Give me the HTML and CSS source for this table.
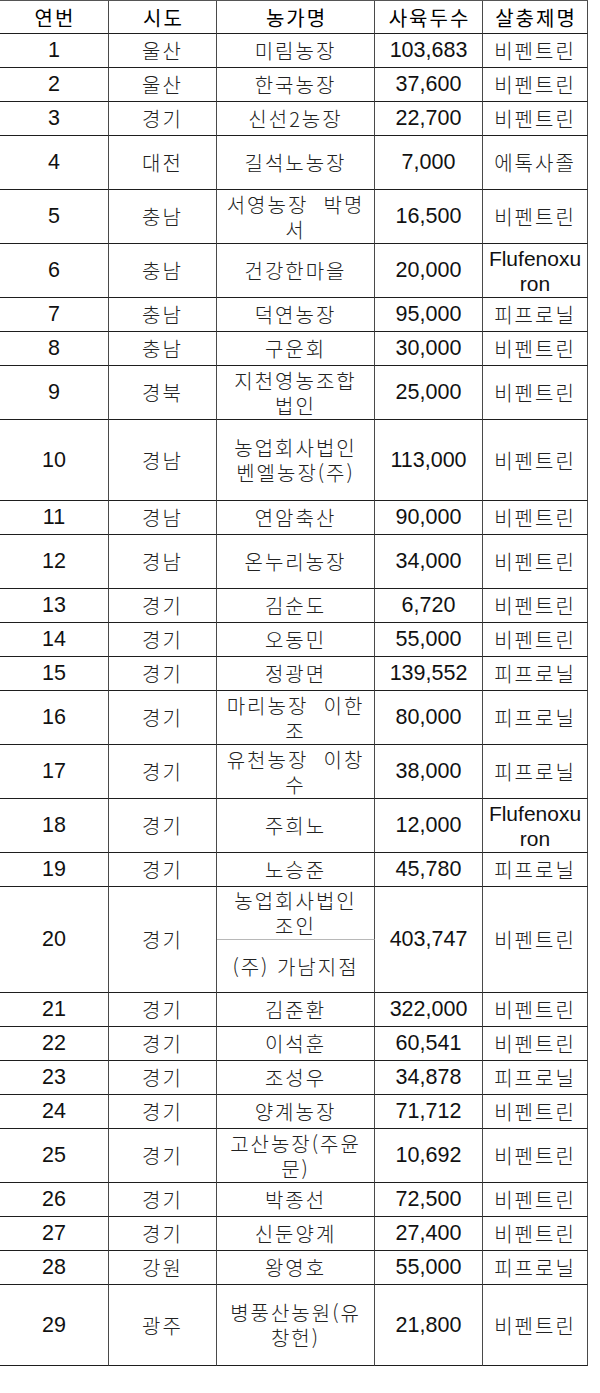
FILE: index.html
```html
<!DOCTYPE html>
<html lang="ko">
<head>
<meta charset="utf-8">
<title>살충제 검출 농가</title>
<link rel="stylesheet" href="styles.css">
</head>
<body>
<table class="sheet">
  <colgroup>
    <col class="c1"><col class="c2"><col class="c3"><col class="c4"><col class="c5">
  </colgroup>
  <thead>
    <tr class="hd"><th>연번</th><th>시도</th><th>농가명</th><th>사육두수</th><th>살충제명</th></tr>
  </thead>
  <tbody>
    <tr class="s"><td class="n">1</td><td class="k">울산</td><td class="k">미림농장</td><td class="n">103,683</td><td class="k">비펜트린</td></tr>
    <tr class="s"><td class="n">2</td><td class="k">울산</td><td class="k">한국농장</td><td class="n">37,600</td><td class="k">비펜트린</td></tr>
    <tr class="s"><td class="n">3</td><td class="k">경기</td><td class="k">신선2농장</td><td class="n">22,700</td><td class="k">비펜트린</td></tr>
    <tr class="d"><td class="n">4</td><td class="k">대전</td><td class="k">길석노농장</td><td class="n">7,000</td><td class="k">에톡사졸</td></tr>
    <tr class="d"><td class="n">5</td><td class="k">충남</td><td class="k">서영농장&nbsp; 박명<br>서</td><td class="n">16,500</td><td class="k">비펜트린</td></tr>
    <tr class="d"><td class="n">6</td><td class="k">충남</td><td class="k">건강한마을</td><td class="n">20,000</td><td class="n en">Flufenoxu<br>ron</td></tr>
    <tr class="s"><td class="n">7</td><td class="k">충남</td><td class="k">덕연농장</td><td class="n">95,000</td><td class="k">피프로닐</td></tr>
    <tr class="s"><td class="n">8</td><td class="k">충남</td><td class="k">구운회</td><td class="n">30,000</td><td class="k">비펜트린</td></tr>
    <tr class="d"><td class="n">9</td><td class="k">경북</td><td class="k">지천영농조합<br>법인</td><td class="n">25,000</td><td class="k">비펜트린</td></tr>
    <tr class="t"><td class="n">10</td><td class="k">경남</td><td class="k">농업회사법인<br>벤엘농장(주)</td><td class="n">113,000</td><td class="k">비펜트린</td></tr>
    <tr class="s"><td class="n">11</td><td class="k">경남</td><td class="k">연암축산</td><td class="n">90,000</td><td class="k">비펜트린</td></tr>
    <tr class="d"><td class="n">12</td><td class="k">경남</td><td class="k">온누리농장</td><td class="n">34,000</td><td class="k">비펜트린</td></tr>
    <tr class="s"><td class="n">13</td><td class="k">경기</td><td class="k">김순도</td><td class="n">6,720</td><td class="k">비펜트린</td></tr>
    <tr class="s"><td class="n">14</td><td class="k">경기</td><td class="k">오동민</td><td class="n">55,000</td><td class="k">비펜트린</td></tr>
    <tr class="s"><td class="n">15</td><td class="k">경기</td><td class="k">정광면</td><td class="n">139,552</td><td class="k">피프로닐</td></tr>
    <tr class="d"><td class="n">16</td><td class="k">경기</td><td class="k">마리농장&nbsp; 이한<br>조</td><td class="n">80,000</td><td class="k">피프로닐</td></tr>
    <tr class="d"><td class="n">17</td><td class="k">경기</td><td class="k">유천농장&nbsp; 이창<br>수</td><td class="n">38,000</td><td class="k">피프로닐</td></tr>
    <tr class="d"><td class="n">18</td><td class="k">경기</td><td class="k">주희노</td><td class="n">12,000</td><td class="n en">Flufenoxu<br>ron</td></tr>
    <tr class="s"><td class="n">19</td><td class="k">경기</td><td class="k">노승준</td><td class="n">45,780</td><td class="k">피프로닐</td></tr>
    <tr class="h"><td class="n" rowspan="2">20</td><td class="k" rowspan="2">경기</td><td class="k sub">농업회사법인<br>조인</td><td class="n" rowspan="2">403,747</td><td class="k" rowspan="2">비펜트린</td></tr>
    <tr class="h"><td class="k">(주) 가남지점</td></tr>
    <tr class="s"><td class="n">21</td><td class="k">경기</td><td class="k">김준환</td><td class="n">322,000</td><td class="k">비펜트린</td></tr>
    <tr class="s"><td class="n">22</td><td class="k">경기</td><td class="k">이석훈</td><td class="n">60,541</td><td class="k">비펜트린</td></tr>
    <tr class="s"><td class="n">23</td><td class="k">경기</td><td class="k">조성우</td><td class="n">34,878</td><td class="k">피프로닐</td></tr>
    <tr class="s"><td class="n">24</td><td class="k">경기</td><td class="k">양계농장</td><td class="n">71,712</td><td class="k">비펜트린</td></tr>
    <tr class="d"><td class="n">25</td><td class="k">경기</td><td class="k">고산농장(주윤<br>문)</td><td class="n">10,692</td><td class="k">비펜트린</td></tr>
    <tr class="s"><td class="n">26</td><td class="k">경기</td><td class="k">박종선</td><td class="n">72,500</td><td class="k">비펜트린</td></tr>
    <tr class="s"><td class="n">27</td><td class="k">경기</td><td class="k">신둔양계</td><td class="n">27,400</td><td class="k">비펜트린</td></tr>
    <tr class="s"><td class="n">28</td><td class="k">강원</td><td class="k">왕영호</td><td class="n">55,000</td><td class="k">피프로닐</td></tr>
    <tr class="t"><td class="n">29</td><td class="k">광주</td><td class="k">병풍산농원(유<br>창헌)</td><td class="n">21,800</td><td class="k">비펜트린</td></tr>
  </tbody>
</table>
</body>
</html>
```

FILE: styles.css
```css
html, body {
  margin: 0;
  padding: 0;
  background: #ffffff;
}

.sheet {
  border-collapse: separate;
  border-spacing: 0;
  table-layout: fixed;
  width: 588px;
  border-top: 1px solid #555555;
}

.c1 { width: 109px; }
.c2 { width: 108px; }
.c3 { width: 158px; }
.c4 { width: 108px; }
.c5 { width: 105px; }

.sheet th,
.sheet td {
  box-sizing: border-box;
  padding: 0;
  text-align: center;
  vertical-align: middle;
  border-right: 1px solid #4a4a4a;
  border-bottom: 1px solid #1e1e1e;
  white-space: nowrap;
}

.sheet th {
  height: 33px;
  font-family: "Noto Sans CJK KR", "Noto Sans", sans-serif;
  font-weight: 400;
  font-size: 20px;
  letter-spacing: 2px;
  padding-left: 2px;
  line-height: 25px;
  color: #000000;
}

.k {
  font-family: "Noto Sans CJK KR", "Noto Sans", sans-serif;
  font-weight: 300;
  font-size: 20px;
  letter-spacing: 2px;
  padding-left: 2px;
  line-height: 25px;
  color: #222222;
}

.n {
  font-family: "Liberation Sans", Arial, sans-serif;
  font-size: 21.5px;
  line-height: 25px;
  color: #111111;
}

.sheet td.en {
  font-size: 21px;
  line-height: 25px;
}

.s td { height: 34px; }
.d td { height: 54px; }
.t td { height: 81px; }
.h td { height: 53px; }
.h td[rowspan] { height: 106px; }

.sheet td.sub {
  border-bottom-color: #b8b8b8;
}
```
